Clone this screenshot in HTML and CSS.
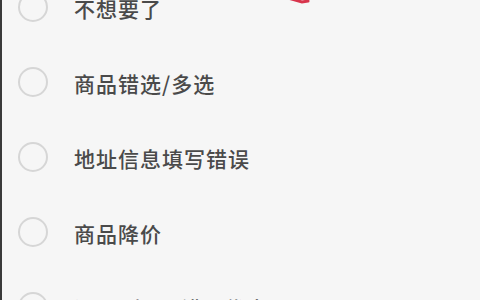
FILE: index.html
```html
<!DOCTYPE html>
<html lang="zh-CN">
<head>
  <meta charset="UTF-8">
  <meta name="viewport" content="width=device-width, initial-scale=1.0">
  <title>取消原因</title>
  <link rel="stylesheet" href="styles.css">
</head>
<body>
  <div class="panel">
    <!-- 标注 -->
    <svg class="mark" width="30" height="8" viewBox="0 0 30 8">
      <path d="M4 0 L18 4 L24 3" stroke="#d8344c" stroke-width="3" fill="none" stroke-linecap="round"/>
    </svg>

    <!-- 原因列表 -->
    <ul class="reasons">
      <li class="reason"><span class="radio"></span><span class="label">不想要了</span></li>
      <li class="reason"><span class="radio"></span><span class="label">商品错选/多选</span></li>
      <li class="reason"><span class="radio"></span><span class="label">地址信息填写错误</span></li>
      <li class="reason"><span class="radio"></span><span class="label">商品降价</span></li>
      <li class="reason"><span class="radio"></span><span class="label">没用/少用/错用优惠</span></li>
    </ul>
  </div>
</body>
</html>
```

FILE: styles.css
```css
html, body {
  margin: 0;
  height: 100%;
  overflow: hidden;
}
body {
  font-family: "Noto Sans CJK SC", "Noto Sans", sans-serif;
  background-color: #f6f6f6;
}
.panel {
  display: flow-root;
  position: relative;
  height: 100%;
  overflow: hidden;
  border-left: 2px solid #3a3a3a;
  background-color: #f6f6f6;
}
.mark {
  position: absolute;
  left: 282px;
  top: -2px;
}
.reasons {
  list-style: none;
  margin: -31px 0 0 0;
  padding: 0;
}
.reason {
  display: flex;
  align-items: center;
  height: 75px;
  padding-left: 16px;
}
.radio {
  width: 26px;
  height: 26px;
  border: 2px solid #d6d6d6;
  border-radius: 50%;
  flex-shrink: 0;
}
.label {
  margin-left: 26px;
  margin-top: 3px;
  font-size: 21px;
  font-weight: 500;
  letter-spacing: 1px;
  color: #4a4a4a;
}
```
